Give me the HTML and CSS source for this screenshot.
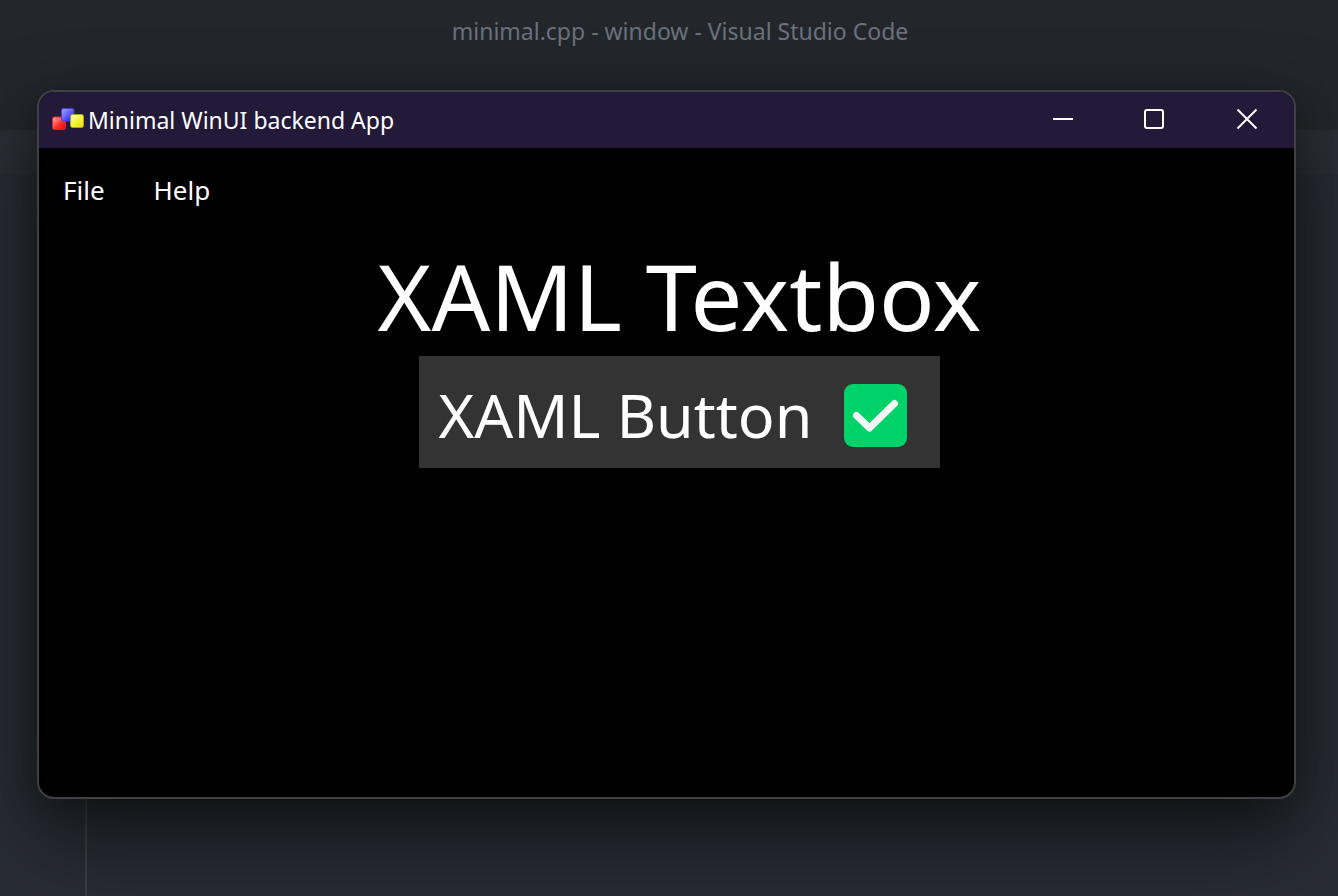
FILE: index.html
```html
<!DOCTYPE html>
<html lang="en">
<head>
<meta charset="utf-8">
<title>Minimal WinUI backend App</title>
<link rel="stylesheet" href="styles.css">
</head>
<body>
<div class="desktop">
  <div class="editor">
    <header class="editor-title">minimal.cpp - window - Visual Studio Code</header>
    <div class="editor-tabs"></div>
    <div class="editor-body"><div class="activity-bar"></div></div>
  </div>
  <main class="window">
    <header class="titlebar">
      <svg class="app-icon" viewBox="0 0 32 24" aria-hidden="true">
        <defs>
          <linearGradient id="red" x1="0" y1="0" x2="1" y2="1"><stop offset="0" stop-color="#ffb5b0"/><stop offset=".55" stop-color="#ff3030"/><stop offset="1" stop-color="#f00000"/></linearGradient>
          <linearGradient id="blue" x1="0" y1="0" x2="1" y2="1"><stop offset="0" stop-color="#a8a8ff"/><stop offset=".5" stop-color="#6262ff"/><stop offset="1" stop-color="#1010e8"/></linearGradient>
          <linearGradient id="yellow" x1="0" y1="0" x2="1" y2="1"><stop offset="0" stop-color="#ffffa8"/><stop offset=".5" stop-color="#f4f43c"/><stop offset="1" stop-color="#e0e000"/></linearGradient>
        </defs>
        <rect x=".5" y="9" width="13" height="12.5" rx="2" fill="url(#red)" stroke="#d8282c"/>
        <rect x="9.500" y=".5" width="12.500" height="12.500" rx="2" fill="url(#blue)" stroke="#4444cc"/>
        <rect x="18.500" y="6.500" width="13" height="13" rx="2" fill="url(#yellow)" stroke="#a8a828"/>
      </svg>
      <h1 class="window-title">Minimal WinUI backend App</h1>
      <div class="captions">
        <button class="caption" aria-label="Minimize"><svg viewBox="0 0 22 22"><path d="M1 11H21"/></svg></button>
        <button class="caption" aria-label="Maximize"><svg viewBox="0 0 22 22"><rect x="1" y="2" width="18" height="18" rx="2"/></svg></button>
        <button class="caption" aria-label="Close"><svg viewBox="0 0 22 22"><path d="M1.500 1.500l19 19M20.500 1.500l-19 19"/></svg></button>
      </div>
    </header>
    <nav class="menu">
      <button class="menu-item">File</button>
      <button class="menu-item">Help</button>
    </nav>
    <section class="content">
      <p class="textbox">XAML Textbox</p>
      <button class="xaml-button">
        <span>XAML Button</span>
        <svg class="check" viewBox="0 0 63 63" aria-hidden="true"><rect width="63" height="63" rx="9" fill="#00d26a"/><path d="M12.500 31.500L25.500 44L50.500 19.500" fill="none" stroke="#f4f4f4" stroke-width="7" stroke-linecap="round" stroke-linejoin="round"/></svg>
      </button>
    </section>
  </main>
</div>
</body>
</html>
```
FILE: styles.css
```css
* { box-sizing: border-box; }

body {
  margin: 0;
  background: #282c34;
  font-family: "Noto Sans", "Open Sans", sans-serif;
}

button {
  border: 0;
  background: none;
  color: inherit;
  font: inherit;
}

.desktop {
  display: grid;
  min-height: 100vh;
  overflow: hidden;
}

.editor,
.window { grid-area: 1 / 1; min-width: 0; }

.editor {
  display: flex;
  flex-direction: column;
}

.editor-title {
  height: 130px;
  padding-left: 22px;
  background: #23272c;
  color: #6b717d;
  font-size: 23px;
  line-height: 62px;
  text-align: center;
}

.editor-tabs {
  height: 46px;
  background: #2b2f36;
  border-bottom: 2px solid #272b31;
}

.editor-body { display: flex; flex: 1; }

.activity-bar {
  width: 87px;
  border-right: 2px solid #3b3e45;
}

.window {
  display: flex;
  flex-direction: column;
  margin: 90px 42px 97px 37px;
  overflow: hidden;
  border: 2px solid #404043;
  border-radius: 17px;
  background: #000;
  box-shadow: 0 38px 84px rgba(0, 0, 0, .55), 0 4px 36px rgba(0, 0, 0, .25);
  color: #fff;
}

.titlebar {
  display: flex;
  align-items: center;
  height: 56px;
  padding-left: 13px;
  background: #221a38;
}

.app-icon { width: 32px; height: 24px; }

.window-title {
  flex: 1;
  margin: 0 0 0 4px;
  font-size: 23px;
  font-weight: 400;
  line-height: 56px;
}

.captions { display: flex; align-self: flex-start; padding-right: 1px; }

.caption {
  display: grid;
  place-items: center;
  width: 92px;
  height: 54px;
  padding: 0;
}

.caption svg {
  width: 22px;
  height: 22px;
  fill: none;
  stroke: #fff;
  stroke-width: 2;
}

.menu {
  display: flex;
  height: 80px;
  padding-left: 4px;
}

.menu-item {
  padding: 4px 20px 0;
  margin-right: 9px;
  font-size: 26px;
  line-height: 76px;
}

.content {
  display: flex;
  flex: 1;
  flex-direction: column;
  align-items: center;
  padding-left: 26px;
}

.textbox {
  margin: 0;
  padding-top: 8px;
  font-size: 92px;
  line-height: 120px;
}

.xaml-button {
  display: flex;
  align-items: center;
  gap: 32px;
  height: 112px;
  padding: 4px 33px 0 20px;
  background: #333;
  font-size: 61px;
}

.check { width: 63px; height: 63px; margin-top: 3px; }
```
